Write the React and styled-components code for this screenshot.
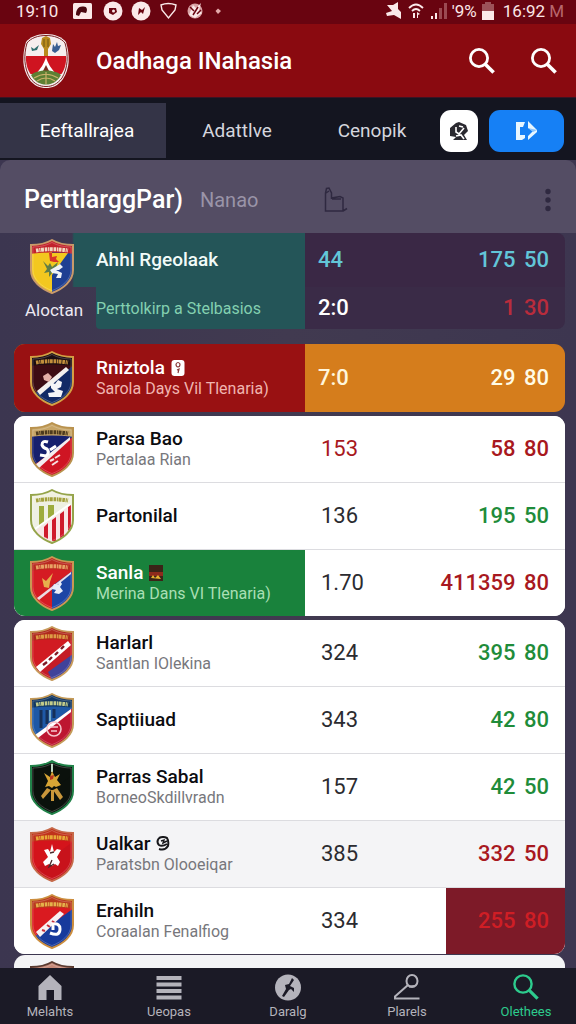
import React from 'react'
import styled, { createGlobalStyle } from 'styled-components'

const GlobalStyle = createGlobalStyle`
  *, *::before, *::after {
    box-sizing: border-box;
  }
  body {
    margin: 0;
    background: #3f384f;
    font-family: Roboto, "Liberation Sans", sans-serif;
  }
  button {
    border: 0;
    padding: 0;
    background: none;
    color: inherit;
    font: inherit;
    cursor: pointer;
  }
  svg {
    display: block;
    flex: none;
  }
`

const Page = styled.div`
  display: flex;
  flex-direction: column;
  height: 100vh;
  overflow: hidden;
  background: linear-gradient(90deg, #3c3650, #413a50 50%, #3d3650);
`

const StatusBar = styled.div`
  display: flex;
  align-items: center;
  justify-content: space-between;
  flex: none;
  height: 24px;
  padding: 0 12px 2px 16px;
  background: #690410;
  color: #fbe6e6;
  font-size: 17px;
  line-height: 20px;
`

const StatusGroup = styled.div`
  display: flex;
  align-items: center;
  gap: ${(p) => p.$gap};
`

const Clock = styled.span`
  margin-left: ${(p) => (p.$end ? '4px' : '0')};
`

const Faded = styled.span`
  color: #b8676d;
`

const Header = styled.header`
  display: flex;
  align-items: center;
  flex: none;
  height: 73px;
  padding: 0 18px 0 22px;
  background: #8a0a10;
  color: #fff;
`

const Title = styled.h1`
  flex: 1;
  margin: 0 0 0 26px;
  font-size: 24px;
  line-height: 28px;
  font-weight: 500;
`

const HeaderActions = styled.div`
  display: flex;
  gap: 34px;
`

const Tabs = styled.nav`
  display: grid;
  grid-template-columns: minmax(0, 166fr) minmax(0, 142fr) minmax(0, 128fr) 128px;
  grid-template-rows: 100%;
  align-items: center;
  flex: none;
  height: 63px;
  padding: 5px 12px 2px 0;
  border-top: 1px solid #3a1424;
  background: #141520;
`

const Tab = styled.button`
  height: 100%;
  padding-left: ${(p) => (p.$active ? '8px' : '0')};
  font-size: 19px;
  color: ${(p) => (p.$active ? '#fff' : '#d5d6de')};
  background: ${(p) => (p.$active ? '#343447' : 'transparent')};
`

const TabActions = styled.div`
  display: grid;
  grid-template-columns: 38px 75px;
  gap: 11px;
  justify-content: end;
`

const TabAction = styled.button`
  display: flex;
  align-items: center;
  justify-content: center;
  height: 42px;
  border-radius: 11px;
  background: ${(p) => p.$color};
`

const PanelHead = styled.div`
  display: flex;
  align-items: center;
  flex: none;
  height: 73px;
  padding: 6px 22px 0 24px;
  border-radius: 10px 10px 0 0;
  background: #544d64;
  color: #2f2940;
`

const PanelTitle = styled.h2`
  margin: 0;
  color: #fff;
  font-size: 25px;
  line-height: 30px;
  font-weight: 500;
`

const PanelNote = styled.span`
  margin: 0 66px 0 17px;
  color: #9a94a8;
  font-size: 20px;
  line-height: 30px;
`

const MoreButton = styled.button`
  margin-left: auto;
`

const Content = styled.main`
  flex: 1;
  min-height: 0;
  overflow: hidden;
  padding: 0 11px 0 14px;
`

const columns = 'minmax(0, 291fr) minmax(0, 141fr) minmax(0, 119fr)'

const Featured = styled.section`
  display: grid;
  grid-template-columns: ${columns};
  grid-template-rows: 54px 42px;
  margin-bottom: 15px;
`

const FeaturedTop = styled.div`
  display: flex;
  align-items: center;
  background: linear-gradient(90deg, transparent 58px, #245558 60px);
`

const FeaturedBottom = styled.div`
  display: flex;
`

const FeaturedLabel = styled.div`
  width: 82px;
  padding-left: 11px;
  color: #ece9f1;
  font-size: 17px;
  line-height: 46px;
`

const FeaturedNote = styled.div`
  flex: 1;
  border-bottom-left-radius: 4px;
  background: #245558;
  color: #83d0b0;
  font-size: 16px;
  line-height: 44px;
  white-space: nowrap;
`

const List = styled.ul`
  margin: 0 0 ${(p) => p.$gap || '4px'};
  padding: 0;
  list-style: none;
  overflow: hidden;
  border-radius: 11px;
  background: #fff;
`

const Row = styled.li`
  display: grid;
  grid-template-columns: ${columns};
  height: ${(p) => (p.$solo ? '68px' : '66px')};
  background: ${(p) => p.$bg || '#fff'};
  & + & {
    height: 67px;
    border-top: 1px solid #dcdce0;
  }
`

const Team = styled.div`
  display: flex;
  align-items: center;
  background: ${(p) => p.$bg || 'transparent'};
  color: ${(p) => (p.$bg ? '#fff' : '#0c0c10')};
`

const CrestBox = styled.div`
  display: flex;
  justify-content: center;
  flex: none;
  width: 76px;
  margin-right: 6px;
  padding-top: ${(p) => (p.$low ? '12px' : '0')};
`

const Name = styled.div`
  display: flex;
  align-items: center;
  gap: 6px;
  font-size: 19px;
  line-height: 22px;
  font-weight: 500;
  white-space: nowrap;
`

const FeaturedName = styled(Name)`
  color: #f2fbf8;
`

const Sub = styled.div`
  color: ${(p) => p.$color || '#77777c'};
  font-size: 16px;
  line-height: 20px;
  white-space: nowrap;
`

const Value = styled.div`
  display: flex;
  align-items: center;
  justify-content: ${(p) => (p.$end ? 'flex-end' : 'flex-start')};
  gap: 3px;
  padding: ${(p) => (p.$near ? '0 16px 0 13px' : '0 16px')};
  border-radius: ${(p) => p.$round || '0'};
  background: ${(p) => p.$bg || 'transparent'};
  color: ${(p) => p.$color || '#2b2b30'};
  font-size: 22px;
  line-height: 26px;
  font-weight: ${(p) => p.$weight || 400};
  white-space: pre;
`

const BottomNav = styled.nav`
  display: flex;
  justify-content: space-between;
  flex: none;
  height: 56px;
  padding: 0 12px;
  background: #1b1a26;
`

const NavButton = styled.button`
  display: flex;
  flex-direction: column;
  align-items: center;
  gap: 2px;
  width: 76px;
  padding-top: 5px;
  color: ${(p) => (p.$active ? '#2dcb8d' : '#b4b3bb')};
  font-size: 13px;
  line-height: 18px;
`

function SearchIcon({ size = 28, width = 2.8 }) {
  return (
    <svg width={size} height={size} viewBox="0 0 28 28" fill="none" stroke="currentColor" strokeWidth={width}>
      <circle cx="11" cy="11" r="8.6" />
      <path d="M17.3 17.3L25.6 25.6" strokeWidth={width + 0.8} />
    </svg>
  )
}

function Emblem() {
  return (
    <svg width="48" height="56" viewBox="0 0 48 56">
      <path d="M24 1C33 1 40 4 44 9C48 22 48 36 41 46C36 53 30 55 24 55C18 55 12 53 7 46C0 36 0 22 4 9C8 4 15 1 24 1Z" fill="#f6eeee" />
      <path d="M24 2.500C32 2.500 39 5 43 10C46.500 22 46 35 40 45C35 51.500 30 53.500 24 53.500C18 53.500 13 51.500 8 45C2 35 1.500 22 5 10C9 5 16 2.500 24 2.500Z" fill="none" stroke="#7c2326" strokeWidth="1" />
      <path d="M4 23H44C44.500 29 43 36 39.500 41H8.500C5 36 3.500 29 4 23Z" fill="#cf1420" />
      <path d="M24 24C26 31 29 35 34 41H14C19 35 22 31 24 24Z" fill="#fff" />
      <path d="M24 32L28 40H20Z" fill="#7c2a20" />
      <path d="M9 42C15 36 33 36 39 42C35 49 30 51.500 24 51.500C18 51.500 13 49 9 42Z" fill="#5d7f34" />
      <path d="M12 45C20 40 28 40 36 45M15 48C21 44 27 44 33 48M24 39V51" fill="none" stroke="#c9b16a" strokeWidth="1.200" />
      <path d="M20 5L24 3L28 5L29 11L26 16L26 23H22L22 16L19 11Z" fill="#b98a1d" />
      <path d="M22 6V14M26 6V14" stroke="#6e5414" strokeWidth="1" />
      <path d="M9 14L12 16L17 12L15 17L10 18Z" fill="#2f6d6d" />
      <path d="M31 11L33 14L35 9L36 13L39 12L37 17L33 20L30 18Z" fill="#3a5d92" />
    </svg>
  )
}

const SHIELD = 'M22 1C29 5 37 6 43 6V31C43 42 33 50 22 54C11 50 1 42 1 31V6C7 6 15 5 22 1Z'

/* base = upper left field, half = lower right field */
const crests = {
  ablak: {
    edge: '#c99a6a', base: '#f3c81f', half: '#1f3f92', split: 'M22 0H44V56H22Z', band: '#c2222c', ink: '#f3d9c0',
    art: (
      <>
        <path d="M22 36V14H38Z" fill="#f3c81f" />
        <path d="M19 14H22V18L27 17L26 20L29 23L24 23L20 22Z" fill="#d9342a" />
        <path d="M13 22L18 27L20 24L22 28L28 23L26 29L22 34L19 38L19 33L14 34L17 30Z" fill="#5f7d48" />
        <path d="M20 31L27 27L30 25L33 28L29 31L26 31L32 34L31 39L26 39L28 35L22 34Z" fill="#eef1f6" />
      </>
    ),
  },
  rniz: {
    edge: '#d3a044', base: '#3c0c14', half: '#122a66', band: '#1b0d12', ink: '#c28e3c',
    art: (
      <>
        <path d="M7 40L36 16L39 19L10 44Z" fill="#f3f0ee" />
        <path d="M13 25L18 22L22 26L19 31L14 29Z" fill="#e2b0a8" />
        <path d="M21 31L25 33L28 29L32 31L31 36L27 38L33 40L31 46H19L18 42L25 41L21 37Z" fill="#f4f4f8" />
      </>
    ),
  },
  parsa: {
    edge: '#b9924e', base: '#16206e', half: '#cf1523', band: '#c7a566', ink: '#4d3a1d',
    art: (
      <>
        <path d="M5 43L40 15V18L9 46Z" fill="#f3eef0" />
        <path d="M18 20Q12 18 12 23Q13 26 17 27Q20 31 16 34L10 33M20 28L26 24" fill="none" stroke="#fff" strokeWidth="3" />
        <path d="M20 39L24 37M25 36L30 33M22 43L28 39" stroke="#f6dfe0" strokeWidth="2" />
      </>
    ),
  },
  parto: {
    edge: '#95a44a', base: '#eef0e2', half: '#f8e6e6', band: '#f1f1e0', ink: '#a3a13c',
    art: (
      <>
        <path d="M9 17H14V34L9 38ZM18 16H24V26L18 31Z" fill="#9dac3c" />
        <path d="M14 38L18 34V50L14 48ZM22 31L26 28V52H22ZM30 25L34 22V47L30 49ZM38 18L41 16V38L38 42Z" fill="#cf1b2c" />
        <path d="M5 40L40 15" stroke="#fff" strokeWidth="2" />
      </>
    ),
  },
  sanla: {
    edge: '#c99853', base: '#d51c23', half: '#1c45a5', band: '#b92a20', ink: '#e8a264',
    art: (
      <>
        <path d="M4 40L22 30V54H12Z" fill="#d51c23" />
        <path d="M7 42L41 16V18L9 44Z" fill="#eadde4" />
        <path d="M12 22L16 25L23 17L20 26L19 32L14 31Z" fill="#e7ae4d" />
        <path d="M24 28L28 29L30 25L32 28L30 31L33 35L29 38L24 37L26 34L22 33Z" fill="#e8edf8" />
      </>
    ),
  },
  harl: {
    edge: '#c79a5b', base: '#d11b22', half: '#c41b26', band: '#b02a1c', ink: '#dd9c45',
    art: (
      <>
        <path d="M18 46L43 28V37C38 46 31 50 22 54Z" fill="#40429a" />
        <path d="M6 41L38 15L41 19L10 46Z" fill="#fff" />
        <path d="M13 39L17 36M19 34L22 31M25 29L28 26M31 23L34 20" stroke="#7e1a25" strokeWidth="2.400" />
      </>
    ),
  },
  sapt: {
    edge: '#c49a58', base: '#1e58a6', half: '#bd1630', band: '#123762', ink: '#c2cc8a',
    art: (
      <>
        <path d="M11 17V35M17 17V31M24 16V25" stroke="#163059" strokeWidth="3" />
        <path d="M20 17V28" stroke="#93c8d6" strokeWidth="1.500" />
        <path d="M5 42L41 16V19L8 45Z" fill="#fff" />
        <circle cx="24" cy="36" r="7" fill="none" stroke="#f5c8ce" strokeWidth="1.600" />
        <path d="M20 34H28M21 38H27" stroke="#f5c8ce" strokeWidth="1.600" />
      </>
    ),
  },
  parras: {
    edge: '#218249', base: '#0b110c', half: '#0b110c',
    art: (
      <>
        <path d="M21 4H23V12H21Z" fill="#bfd7c4" />
        <path d="M14 13L20 17L22 11L25 17L30 14L27 20L31 25L26 27L24 26L22 28L19 26L15 27L18 21Z" fill="#d7a535" />
        <path d="M20 16L24 15L23 19L20 20Z" fill="#b9331f" />
        <path d="M17 28L11 36L13 39L21 30ZM27 28L33 37L30 40L23 30ZM21 30H24V41H21Z" fill="#c9973b" />
      </>
    ),
  },
  ualkar: {
    edge: '#c66a4a', base: '#d4141b', half: '#c8121b', band: '#c0331b', ink: '#e8ab38',
    art: (
      <>
        <path d="M14 23L18 22L20 25L22 17L24 25L27 22L31 23L27 30L30 35L28 39L25 37L22 39L19 37L15 39L13 35L18 30Z" fill="#fff" />
        <path d="M20 26L24 25M22 33L19 40L24 37" fill="none" stroke="#4a2a2c" strokeWidth="1.300" />
      </>
    ),
  },
  erah: {
    edge: '#cc8e3f', base: '#da1a20', half: '#173a9c', band: '#b93a1d', ink: '#e5b24b',
    art: (
      <>
        <path d="M6 38L30 17L34 20L10 43Z" fill="#f7f1f3" />
        <path d="M12 36L15 37M17 31L20 33M22 27L25 29" stroke="#c5303b" strokeWidth="2" />
        <path d="M20 39Q30 43 30 35Q30 29 23 30V36" fill="none" stroke="#fff" strokeWidth="3" />
      </>
    ),
  },
  last: { edge: '#5a3a30', base: '#3a1c1c', half: '#3a1c1c', band: '#c58878', ink: '#8f5145' },
}

function Crest({ id }) {
  const c = crests[id]
  return (
    <svg width="44" height="55" viewBox="0 0 44 55">
      <clipPath id={'crest-' + id}>
        <path d={SHIELD} />
      </clipPath>
      <g clipPath={'url(#crest-' + id + ')'}>
        <rect width="44" height="55" fill={c.base} />
        <path d={c.split || 'M44 14L0 46V56H44Z'} fill={c.half} />
        {c.art}
        {c.band && <path d="M0 0H44V15Q22 12 0 15Z" fill={c.band} />}
        {c.band && <path d="M6 11.500Q22 9 38 11.500" fill="none" stroke={c.ink} strokeWidth="4" strokeDasharray="2.600 0.700 1.200 0.500 3 0.800" />}
      </g>
      <path d={SHIELD} fill="none" stroke={c.edge} strokeWidth="2" />
      <path d={SHIELD} fill="none" stroke="#fff" strokeOpacity="0.350" strokeWidth="0.700" transform="translate(2 2.500) scale(0.909)" />
    </svg>
  )
}

function StatusIconsLeft() {
  return (
    <svg width="154" height="20" viewBox="0 0 154 20" fill="#fbe9e9">
      <rect x="2" y="2" width="19" height="16" rx="1.500" />
      <path d="M5 14C5 8 8 5 12 5.500C16 5 17 9 15 12L10 11L8 15Z" fill="#4a0710" />
      <circle cx="42" cy="10" r="9.500" />
      <path d="M38 7H45L46 11L42 14L38 12Z" fill="#690410" />
      <circle cx="42.500" cy="10" r="1.500" />
      <circle cx="70" cy="10" r="9.500" />
      <path d="M67 14L68 7L71 9L74 6L72 13L70 11Z" fill="#690410" />
      <path d="M90 4Q97 1 105 4L104 9L97.500 17L91 9Z" fill="none" stroke="#fbe9e9" strokeWidth="1.400" />
      <circle cx="124" cy="10" r="7.500" fill="#d9a3a5" />
      <path d="M118 14L122 4L125 7L130 2L128 9L131 12L124 17Z" fill="#fbe9e9" />
      <path d="M119 6L123 10M127 6L122 14M126 13L130 9" stroke="#690410" strokeWidth="1.500" />
      <path d="M147 7.500L150 10L147 13L144.500 10Z" fill="#e3a9aa" />
    </svg>
  )
}

function StatusIconsRight() {
  return (
    <svg width="64" height="20" viewBox="0 0 64 20" fill="#fbe9e9">
      <path d="M3 4L9 4L14 1V8L17 11V18L10 14L3 15L2 12L8 10Z" />
      <path d="M25 7Q32 0 39 7M28 10Q32 6 36 10" fill="none" stroke="#fbe9e9" strokeWidth="1.800" />
      <path d="M29 12H31V17H29ZM33 11L36 13L34 14V17H33Z" />
      <path d="M47 15H49V18H47ZM51 12H53V18H51Z" />
      <path d="M55 7H58V18H55ZM60 2H63V18H60Z" fill="#9b4a52" />
    </svg>
  )
}

function Battery() {
  return (
    <svg width="14" height="19" viewBox="0 0 14 19">
      <path d="M4 0H10V2H13V9H1V2H4Z" fill="#9c5259" />
      <rect x="1" y="9" width="12" height="9" fill="#fbe9e9" />
    </svg>
  )
}

function BadgeIcon() {
  return (
    <svg width="20" height="20" viewBox="0 0 20 20">
      <path d="M1 7L7 2L10 1L17 4L19 10L15 14L18 19H4L7 16L1 15Z" fill="#2a2930" />
      <path d="M7 6V11L10 13L15 7M7 15L12 14L15 18M10 5L14 6" fill="none" stroke="#fff" strokeWidth="1.600" />
    </svg>
  )
}

function ShareIcon() {
  return (
    <svg width="22" height="20" viewBox="0 0 22 20" fill="#e8f6ff">
      <path d="M0 1H9L7 6H4V14H9V17L6 19H0Z" />
      <path d="M12 0L21 9V11L12 19V15L17 10L12 7Z" />
      <path d="M12 7L21 9L17 11Z" fill="#8cc6ff" />
    </svg>
  )
}

function ThumbIcon() {
  return (
    <svg width="24" height="26" viewBox="0 0 24 26" fill="none" stroke="currentColor" strokeWidth="1.500">
      <path d="M1.500 24V6L2.500 1.500L5 1L7.500 6V11L16 9.500L19 11V24H1.500ZM19 24L23 21.500M2 6L5 4M8 12H17" />
    </svg>
  )
}

function DotsIcon() {
  return (
    <svg width="12" height="24" viewBox="0 0 12 24" fill="currentColor">
      <circle cx="6" cy="3.500" r="2.700" />
      <circle cx="6" cy="12" r="2.700" />
      <circle cx="6" cy="20.500" r="2.700" />
    </svg>
  )
}

function WhiteTag() {
  return (
    <svg width="14" height="18" viewBox="0 0 14 18">
      <rect x="0.500" y="1" width="13" height="16" rx="3" fill="#fff" />
      <path d="M5 5Q7 2 9 5Q9 8 7 8Q5 8 5 5M6 11L8 10L7 14" fill="none" stroke="#8a3a3a" strokeWidth="1.200" />
    </svg>
  )
}

function FlagTag() {
  return (
    <svg width="14" height="18" viewBox="0 0 14 18">
      <rect y="1" width="14" height="16" fill="#3b2418" />
      <path d="M0 8H14V12H0Z" fill="#8e2a1c" />
      <path d="M2 14L4 11L6 14L9 11L12 15Z" fill="#e9b32f" />
    </svg>
  )
}

function BallTag() {
  return (
    <svg width="14" height="16" viewBox="0 0 14 16" fill="none" stroke="#17171b" strokeWidth="2">
      <path d="M3 2Q7 0 11 2Q13 5 12 10Q9 15 3 13M3 2Q0 6 3 9Q6 11 11 8" />
      <path d="M5 5L8 4L7 7L11 5" strokeWidth="1.400" />
    </svg>
  )
}

function HomeIcon() {
  return (
    <svg width="28" height="28" viewBox="0 0 28 28" fill="currentColor">
      <path d="M14 2L25.500 13V27H18V17H10.500V27H2.500V13Z" />
    </svg>
  )
}

function ListIcon() {
  return (
    <svg width="28" height="28" viewBox="0 0 28 28" fill="currentColor">
      <path d="M1.500 3H26.500V7H1.500ZM1.500 9.500H26.500V13.500H1.500ZM1.500 16H26.500V20H1.500ZM1.500 22.500H26.500V26.500H1.500Z" />
    </svg>
  )
}

function CompassIcon() {
  return (
    <svg width="28" height="28" viewBox="0 0 28 28">
      <circle cx="14" cy="14.500" r="13" fill="currentColor" />
      <path d="M18 5L20 7L16 13L20 15V19L17 16L15 17L10 24L8 23L12 16L11 12L15 11Z" fill="#1b1a26" />
    </svg>
  )
}

function PinIcon() {
  return (
    <svg width="28" height="28" viewBox="0 0 28 28" fill="none" stroke="currentColor" strokeWidth="2">
      <ellipse cx="19" cy="8" rx="5.500" ry="6" />
      <path d="M15 12L2 23.500V25.500H26.500M16 13.500L22 13" />
    </svg>
  )
}

const red = '#a81820'
const green = '#1f8c3a'

const groups = [
  {
    rows: [
      { crest: 'rniz', name: 'Rniztola', tag: <WhiteTag />, sub: 'Sarola Days Vil Tlenaria)', subColor: '#f0b5b0', teamBg: '#991112', bg: '#d57d1c', a: '7:0', aColor: '#fff6dc', aWeight: 500, near: true, b: '29 80', bColor: '#fffbe6' },
    ],
  },
  {
    rows: [
      { crest: 'parsa', name: 'Parsa Bao', sub: 'Pertalaa Rian', a: '153', aColor: red, b: '58 80', bColor: red },
      { crest: 'parto', name: 'Partonilal', a: '136', b: '195 50', bColor: green },
      { crest: 'sanla', name: 'Sanla', tag: <FlagTag />, sub: 'Merina Dans VI Tlenaria)', subColor: '#a9dfb4', teamBg: '#19823c', a: '1.70', b: '411359 80', bColor: red },
    ],
  },
  {
    gap: '1px',
    rows: [
      { crest: 'harl', name: 'Harlarl', sub: 'Santlan IOlekina', a: '324', b: '395 80', bColor: green },
      { crest: 'sapt', name: 'Saptiiuad', a: '343', b: '42 80', bColor: green },
      { crest: 'parras', name: 'Parras Sabal', sub: 'BorneoSkdillvradn', a: '157', b: '42 50', bColor: green },
      { crest: 'ualkar', name: 'Ualkar', tag: <BallTag />, sub: 'Paratsbn Olooeiqar', bg: '#f4f4f6', a: '385', b: '332 50', bColor: red },
      { crest: 'erah', name: 'Erahiln', sub: 'Coraalan Fenalfiog', a: '334', b: '255 80', bColor: '#cf1e25', bBg: '#7d1a28' },
    ],
  },
  {
    rows: [{ crest: 'last', name: '', a: '', b: '', bg: '#f4f4f6' }],
  },
]

const navItems = [
  { label: 'Melahts', icon: <HomeIcon /> },
  { label: 'Ueopas', icon: <ListIcon /> },
  { label: 'Daralg', icon: <CompassIcon /> },
  { label: 'Plarels', icon: <PinIcon /> },
  { label: 'Olethees', icon: <SearchIcon width={2.4} />, active: true },
]

function Score({ text, ...rest }) {
  const [main, cents] = text.split(' ')
  return (
    <Value $end $weight={500} {...rest}>
      <span>{main} </span>
      <span>{cents}</span>
    </Value>
  )
}

function TeamRow({ row, solo }) {
  return (
    <Row $bg={row.bg} $solo={solo}>
      <Team $bg={row.teamBg}>
        <CrestBox>
          <Crest id={row.crest} />
        </CrestBox>
        <div>
          <Name>
            {row.name}
            {row.tag}
          </Name>
          {row.sub && <Sub $color={row.subColor}>{row.sub}</Sub>}
        </div>
      </Team>
      <Value $color={row.aColor} $weight={row.aWeight} $near={row.near}>{row.a}</Value>
      {row.b && <Score text={row.b} $color={row.bColor} $bg={row.bBg} />}
    </Row>
  )
}

export default function App() {
  return (
    <Page>
      <GlobalStyle />
      <StatusBar>
        <StatusGroup $gap="13px">
          <Clock>19:10</Clock>
          <StatusIconsLeft />
        </StatusGroup>
        <StatusGroup $gap="4px">
          <StatusIconsRight />
          <span>'9%</span>
          <Battery />
          <Clock $end>16:92</Clock>
          <Faded>M</Faded>
        </StatusGroup>
      </StatusBar>

      <Header>
        <Emblem />
        <Title>Oadhaga INahasia</Title>
        <HeaderActions>
          <button aria-label="Search"><SearchIcon /></button>
          <button aria-label="Find"><SearchIcon /></button>
        </HeaderActions>
      </Header>

      <Tabs>
        <Tab $active>Eeftallrajea</Tab>
        <Tab>Adattlve</Tab>
        <Tab>Cenopik</Tab>
        <TabActions>
          <TabAction $color="#fff" aria-label="Badge"><BadgeIcon /></TabAction>
          <TabAction $color="#1680f5" aria-label="Share"><ShareIcon /></TabAction>
        </TabActions>
      </Tabs>

      <PanelHead>
        <PanelTitle>PerttlarggPar)</PanelTitle>
        <PanelNote>Nanao</PanelNote>
        <ThumbIcon />
        <MoreButton aria-label="More"><DotsIcon /></MoreButton>
      </PanelHead>

      <Content>
        <Featured>
          <FeaturedTop>
            <CrestBox $low><Crest id="ablak" /></CrestBox>
            <FeaturedName>Ahhl Rgeolaak</FeaturedName>
          </FeaturedTop>
          <Value $near $bg="#3a2845" $color="#62c6d8" $weight={500}>44</Value>
          <Score text="175 50" $bg="#3a2845" $color="#62c6d8" $round="0 8px 0 0" />
          <FeaturedBottom>
            <FeaturedLabel>Aloctan</FeaturedLabel>
            <FeaturedNote>Perttolkirp a Stelbasios</FeaturedNote>
          </FeaturedBottom>
          <Value $near $bg="#3a2b47" $color="#fff" $weight={500}>2:0</Value>
          <Score text="1 30" $bg="#3a2b47" $color="#b92c3c" $round="0 0 8px 0" />
        </Featured>

        {groups.map((group, i) => (
          <List key={i} $gap={group.gap}>
            {group.rows.map((row) => (
              <TeamRow key={row.crest} row={row} solo={i === 0} />
            ))}
          </List>
        ))}
      </Content>

      <BottomNav>
        {navItems.map((item) => (
          <NavButton key={item.label} $active={item.active}>
            {item.icon}
            {item.label}
          </NavButton>
        ))}
      </BottomNav>
    </Page>
  )
}
